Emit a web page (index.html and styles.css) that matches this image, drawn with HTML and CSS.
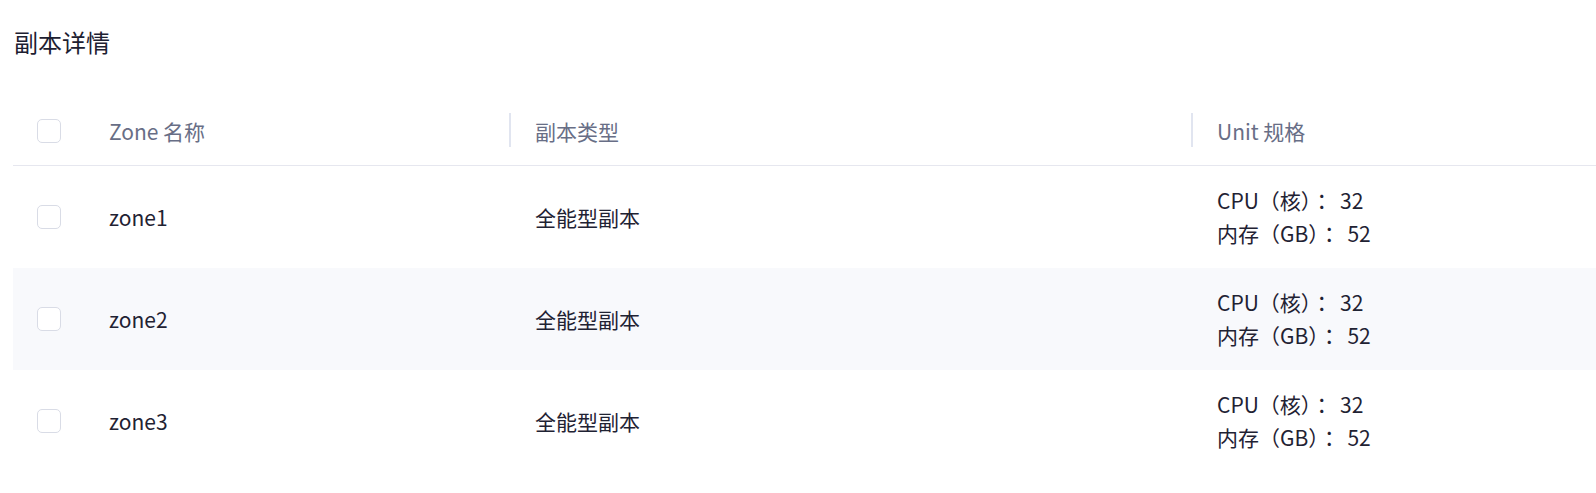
FILE: index.html
```html
<!DOCTYPE html>
<html lang="zh-CN">
<head>
    <meta charset="UTF-8">
    <meta name="viewport" content="width=device-width, initial-scale=1.0">
    <title>副本详情</title>
    <link rel="stylesheet" href="styles.css">
</head>
<body>
    <div class="page">
        <h2 class="title">副本详情</h2>

        <table class="replicas">
            <colgroup>
                <col class="col-check">
                <col class="col-zone">
                <col class="col-type">
                <col>
            </colgroup>
            <thead>
                <tr>
                    <th><span class="check"></span></th>
                    <th>Zone 名称</th>
                    <th class="sep">副本类型</th>
                    <th class="sep">Unit 规格</th>
                </tr>
            </thead>
            <tbody>
                <tr>
                    <td><span class="check"></span></td>
                    <td>zone1</td>
                    <td>全能型副本</td>
                    <td class="spec">CPU（核）： 32<br>内存（GB）： 52</td>
                </tr>
                <tr>
                    <td><span class="check"></span></td>
                    <td>zone2</td>
                    <td>全能型副本</td>
                    <td class="spec">CPU（核）： 32<br>内存（GB）： 52</td>
                </tr>
                <tr>
                    <td><span class="check"></span></td>
                    <td>zone3</td>
                    <td>全能型副本</td>
                    <td class="spec">CPU（核）： 32<br>内存（GB）： 52</td>
                </tr>
            </tbody>
        </table>
    </div>
</body>
</html>
```

FILE: styles.css
```css
body{
    margin: 0;
    background-color: #fff;
    font-family: "Noto Sans CJK SC", "Noto Sans", sans-serif;
}

.page{
    padding: 24px 0 0 13px;
}

.title{
    margin: 0 0 36px 1px;
    font-size: 24px;
    line-height: 36px;
    font-weight: 400;
    color: #1d2031;
}

.replicas{
    width: 100%;
    border-collapse: collapse;
    table-layout: fixed;
    font-size: 21px;
}

.col-check{
    width: 72px;
}

.col-zone{
    width: 424px;
}

.col-type{
    width: 682px;
}

.replicas th{
    position: relative;
    height: 69px;
    padding: 0 24px;
    text-align: left;
    font-weight: 400;
    color: #686e86;
    border-bottom: 1px solid #e6e7ef;
}

.replicas th.sep{
    padding-left: 26px;
}

.replicas th.sep::before{
    content: "";
    position: absolute;
    left: 0;
    top: 17px;
    width: 2px;
    height: 34px;
    background-color: #e1e5f0;
}

.replicas td{
    height: 102px;
    padding: 0 24px;
    line-height: 33px;
    color: #1f2233;
    vertical-align: middle;
}

.replicas td:nth-child(n+3){
    padding-left: 26px;
}

/* centred full-width colon like the original font */
.replicas td.spec{
    font-family: "Noto Sans CJK JP", "Noto Sans CJK SC", sans-serif;
    font-feature-settings: "locl" 0;
    word-spacing: 3px;
}

.replicas tbody tr:nth-child(2){
    background-color: #f8f9fc;
}

.check{
    display: block;
    width: 22px;
    height: 22px;
    border: 1px solid #d9dce6;
    border-radius: 5px;
    background-color: #fff;
}
```
